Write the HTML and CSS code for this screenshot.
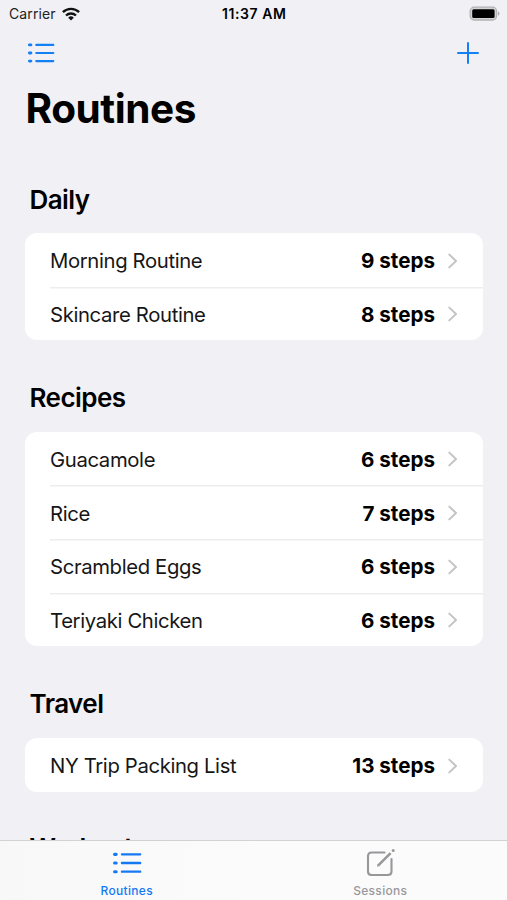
FILE: index.html
```html
<!DOCTYPE html>
<html lang="en">
<head>
<meta charset="utf-8">
<title>Routines</title>
<link rel="stylesheet" href="styles.css">
</head>
<body>
<svg class="defs" aria-hidden="true">
  <symbol id="chevron" viewBox="0 0 10 16"><path d="M1.3 1.6 8 8l-6.700 6.400" fill="none" stroke="#c4c4c7" stroke-width="2" stroke-linecap="round" stroke-linejoin="round"/></symbol>
  <symbol id="list" viewBox="0 0 28 22"><path d="M9.3 2.9h17M9.3 11h17M9.3 19.1h17" fill="none" stroke="currentColor" stroke-width="2.2" stroke-linecap="round"/><path d="M2.4 2.9h1.500M2.4 11h1.500M2.4 19.1h1.500" fill="none" stroke="currentColor" stroke-width="2.9" stroke-linecap="round"/></symbol>
</svg>
<div class="screen">
  <div class="status">
    <div class="carrier"><span>Carrier</span>
      <svg class="wifi" viewBox="0 0 18 14"><g fill="none" stroke="#111" stroke-width="2.3"><path d="M.9 5.2a11.7 11.7 0 0 1 16.2 0"/><path d="M4 8.5a7.2 7.2 0 0 1 10 0"/></g><path d="M9 13.5 6.2 10.7a4 4 0 0 1 5.6 0z" fill="#111"/></svg>
    </div>
    <div class="time">11:37 AM</div>
    <svg class="battery" viewBox="0 0 32 16"><rect x="1.2" y="1.2" width="26.4" height="12.8" rx="4" fill="#d4d4d6" stroke="#b2b2b4" stroke-width="1.3"/><rect x="3.2" y="3.2" width="22.4" height="8.8" rx="1.500" fill="#000"/><path d="M29 5.300q3 2.300 0 4.600z" fill="#aaaaac"/></svg>
  </div>
  <div class="nav">
    <svg class="nav-list" viewBox="0 0 28 22"><use href="#list"/></svg>
    <svg class="nav-plus" viewBox="0 0 22 22"><path d="M11 1v20M1 11h20" stroke="currentColor" stroke-width="2" stroke-linecap="round"/></svg>
  </div>
  <h1>Routines</h1>
  <main>
    <h2>Daily</h2>
    <ul class="card">
      <li><span class="name">Morning Routine</span><b>9 steps</b><svg><use href="#chevron"/></svg></li>
      <li><span class="name">Skincare Routine</span><b>8 steps</b><svg><use href="#chevron"/></svg></li>
    </ul>
    <h2>Recipes</h2>
    <ul class="card">
      <li><span class="name">Guacamole</span><b>6 steps</b><svg><use href="#chevron"/></svg></li>
      <li><span class="name">Rice</span><b>7 steps</b><svg><use href="#chevron"/></svg></li>
      <li><span class="name">Scrambled Eggs</span><b>6 steps</b><svg><use href="#chevron"/></svg></li>
      <li><span class="name">Teriyaki Chicken</span><b>6 steps</b><svg><use href="#chevron"/></svg></li>
    </ul>
    <h2>Travel</h2>
    <ul class="card">
      <li><span class="name">NY Trip Packing List</span><b>13 steps</b><svg><use href="#chevron"/></svg></li>
    </ul>
    <h2 class="last">Workouts</h2>
  </main>
  <nav class="tabs">
    <div class="tab active"><svg class="tab-list" viewBox="0 0 28 22"><use href="#list"/></svg><span>Routines</span></div>
    <div class="tab"><svg class="tab-edit" viewBox="0 0 30 30"><path d="M19.5 4.500H6.500q-3.500 0-3.500 3.500v15.500q0 3.500 3.500 3.500h16.500q3.500 0 3.500-3.500V11" fill="none" stroke="currentColor" stroke-width="2.1" stroke-linecap="round"/><path d="M13.300 17.400 25.600 5.100" stroke="currentColor" stroke-width="2.500"/><path d="m12 18.800.6-2.700 2 2z" fill="currentColor"/><circle cx="28.200" cy="2.500" r="1.500" fill="currentColor"/></svg><span>Sessions</span></div>
  </nav>
</div>
</body>
</html>
```
FILE: styles.css
```css
* { box-sizing: border-box; margin: 0; padding: 0; }
body { font-family: Inter, "Liberation Sans", sans-serif; color: #000; background: #f1f0f5; }
.defs { position: absolute; width: 0; height: 0; }
.screen { width: 507px; height: 900px; overflow: hidden; position: relative; display: flex; flex-direction: column; }
.status { height: 27px; flex: none; display: grid; grid-template-columns: 1fr auto 1fr; align-items: center; padding: 0 6px 0 9px; font-size: 14px; }
.carrier { display: flex; align-items: center; gap: 6px; color: #222; letter-spacing: 0.1px; }
.wifi { width: 18px; height: 14px; }
.time { font-weight: 600; letter-spacing: 0.6px; padding-right: 1.500px; }
.battery { width: 32px; height: 16px; justify-self: end; }
.nav { height: 51px; flex: none; display: flex; justify-content: space-between; align-items: center; padding: 0 28px 0 27px; color: #1380f5; }
.nav-list { width: 28px; height: 22px; }
.nav-plus { width: 22px; height: 22px; }
h1 { flex: none; height: 73.500px; padding-left: 25.500px; font-size: 40.500px; line-height: 61px; font-weight: 700; letter-spacing: -0.45px; }
main { flex: none; padding: 0 24.500px 0 25px; }
h2 { height: 91.500px; padding: 29.500px 0 0 4.500px; font-size: 26px; line-height: 56px; font-weight: 600; letter-spacing: -0.55px; }
h2:first-child { height: 81.500px; padding-top: 20px; }
h2.last { padding-top: 28px; }
.card { list-style: none; background: #fff; border-radius: 12px; padding-left: 25px; }
.card li { height: 53.660px; display: flex; align-items: center; padding: 1.500px 25px 0 0; font-size: 20.300px; letter-spacing: -0.36px; }
.card li + li { box-shadow: inset 0 1.500px #ededef; }
.name { flex: 1; color: #161616; }
.card b { font-weight: 650; font-size: 20.600px; letter-spacing: 0; }
.card svg { width: 10px; height: 16px; margin-left: 12.500px; }
.tabs { position: absolute; left: 0; right: 0; bottom: 0; height: 60px; display: grid; grid-template-columns: 1fr 1fr; background: linear-gradient(90deg, #f8f8f9, #fbfbfc 50%); border-top: 1px solid #d2d2d5; }
.tab { display: flex; flex-direction: column; align-items: center; justify-content: space-between; padding: 7px 0 1.500px; font-size: 12px; line-height: 16px; font-weight: 500; letter-spacing: 0.3px; color: #98989b; }
.active { color: #1479f3; }
.tab-list { width: 30px; height: 30px; }
.tab-edit { width: 30px; height: 30px; }
```
